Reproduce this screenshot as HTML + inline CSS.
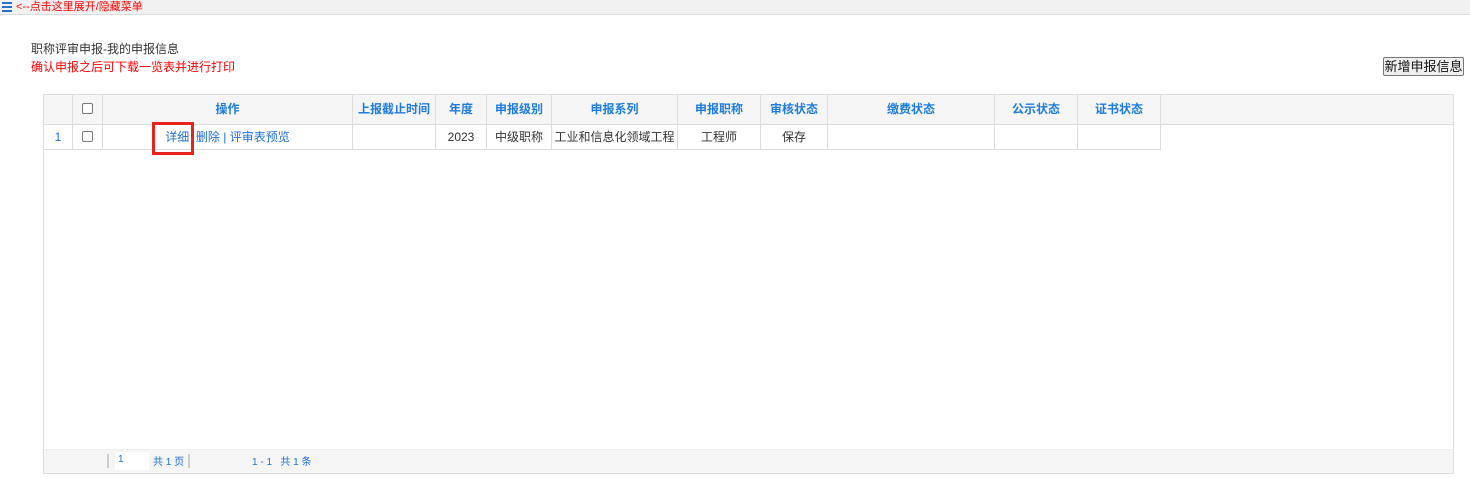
<!DOCTYPE html>
<html><head><meta charset="utf-8"><style>
*{margin:0;padding:0;box-sizing:border-box}
body{width:1470px;height:486px;background:#fff;font-family:"Liberation Sans","Noto Sans CJK SC",sans-serif;font-size:12px;position:relative;overflow:hidden}
.top{position:absolute;left:0;top:0;width:1470px;height:15px;background:#f1f1f1;border-bottom:1px solid #ddd}
.top span{position:absolute;left:16px;top:1px;color:#f00;font-size:11px;line-height:12px}
.ham{position:absolute;left:2px;top:2px;width:10px;height:10px;border-top:2px solid #2a6fc9;border-bottom:2px solid #2a6fc9}
.ham:after{content:"";position:absolute;left:0;top:2px;width:10px;height:2px;background:#2a6fc9}
.t1{position:absolute;left:31px;top:40px;color:#333}
.t2{position:absolute;left:31px;top:58px;color:#f00}
.btn{position:absolute;left:1383px;top:57px;width:81px;height:19px;border:1px solid #767676;background:#efefef;font-size:13px;text-align:center;line-height:17px;color:#111;border-radius:2px}
.grid{position:absolute;left:43px;top:94px;width:1411px;height:380px;border:1px solid #ddd}
.hdr{position:absolute;left:0;top:0;width:1409px;height:30px;background:#f5f5f5;border-bottom:1px solid #ddd}
.c{position:absolute;top:0;height:100%;border-right:1px solid #ddd;text-align:center}
.hdr .c{line-height:29px;color:#1e7be0;font-weight:bold}
.row{position:absolute;left:0;top:30px;width:1117px;height:25px;border-bottom:1px solid #ddd}
.row .c{line-height:24px;color:#333}
.cb{display:inline-block;width:11px;height:11px;border:1px solid #777;border-radius:2px;vertical-align:middle;margin-top:-2px;background:#fff}
a{color:#1e6fd9;text-decoration:none}
.foot{position:absolute;left:0;top:354px;width:1409px;height:24px;background:#f5f5f5;border-top:1px solid #eee;font-size:10px;color:#1e6fd9}
.red{position:absolute;left:152px;top:122px;width:42px;height:33px;border:3px solid #e8231b}
</style></head><body>
<div class="top"><div class="ham"></div><span>&lt;--点击这里展开/隐藏菜单</span></div>
<div class="t1">职称评审申报-我的申报信息</div>
<div class="t2">确认申报之后可下载一览表并进行打印</div>
<div class="btn">新增申报信息</div>
<div class="grid">
<div class="hdr">
<div class="c" style="left:0;width:29px"></div>
<div class="c" style="left:29px;width:30px"><span class="cb"></span></div>
<div class="c" style="left:59px;width:250px">操作</div>
<div class="c" style="left:309px;width:83px">上报截止时间</div>
<div class="c" style="left:392px;width:51px">年度</div>
<div class="c" style="left:443px;width:65px">申报级别</div>
<div class="c" style="left:508px;width:126px">申报系列</div>
<div class="c" style="left:634px;width:83px">申报职称</div>
<div class="c" style="left:717px;width:67px">审核状态</div>
<div class="c" style="left:784px;width:167px">缴费状态</div>
<div class="c" style="left:951px;width:83px">公示状态</div>
<div class="c" style="left:1034px;width:83px">证书状态</div>
</div>
<div class="row">
<div class="c" style="left:0;width:29px;color:#1e6fd9">1</div>
<div class="c" style="left:29px;width:30px"><span class="cb"></span></div>
<div class="c" style="left:59px;width:250px"><a>详细</a>&nbsp; <a>删除</a> <a>|</a> <a>评审表预览</a></div>
<div class="c" style="left:309px;width:83px"></div>
<div class="c" style="left:392px;width:51px">2023</div>
<div class="c" style="left:443px;width:65px">中级职称</div>
<div class="c" style="left:508px;width:126px">工业和信息化领域工程</div>
<div class="c" style="left:634px;width:83px">工程师</div>
<div class="c" style="left:717px;width:67px">保存</div>
<div class="c" style="left:784px;width:167px"></div>
<div class="c" style="left:951px;width:83px"></div>
<div class="c" style="left:1034px;width:83px"></div>
</div>
<div class="foot">
<div style="position:absolute;left:63px;top:4px;width:2px;height:14px;background:#ccc"></div>
<div style="position:absolute;left:71px;top:2px;width:34px;height:18px;background:#fff;padding:2px 0 0 3px">1</div>
<div style="position:absolute;left:109px;top:3px">共 1 页</div>
<div style="position:absolute;left:144px;top:4px;width:2px;height:14px;background:#ccc"></div>
<div style="position:absolute;left:208px;top:3px">1 - 1 &nbsp; 共 1 条</div>
</div>
</div>
<div class="red"></div>
</body></html>
